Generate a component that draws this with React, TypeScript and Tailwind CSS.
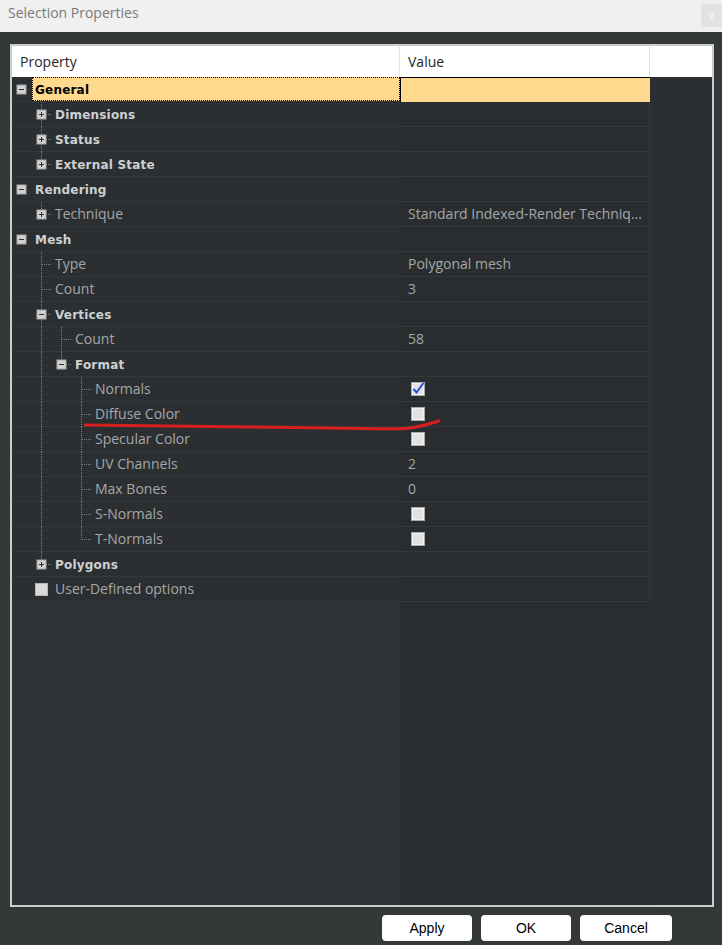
import React from 'react';

type Guide = 'none' | 'pipe' | 'tee' | 'ell' | 'teeBox' | 'ellBox' | 'box' | 'check';

interface Row {
  label: string;
  guides: Guide[];
  sign?: 'plus' | 'minus';
  bold?: boolean;
  value?: string;
  check?: boolean | null;
  selected?: boolean;
}

const rows: Row[] = [
  { label: 'General', guides: ['box'], sign: 'minus', bold: true, selected: true },
  { label: 'Dimensions', guides: ['none', 'teeBox'], sign: 'plus', bold: true },
  { label: 'Status', guides: ['none', 'teeBox'], sign: 'plus', bold: true },
  { label: 'External State', guides: ['none', 'ellBox'], sign: 'plus', bold: true },
  { label: 'Rendering', guides: ['box'], sign: 'minus', bold: true },
  { label: 'Technique', guides: ['none', 'ellBox'], sign: 'plus', value: 'Standard Indexed-Render Techniq...' },
  { label: 'Mesh', guides: ['box'], sign: 'minus', bold: true },
  { label: 'Type', guides: ['none', 'tee'], value: 'Polygonal mesh' },
  { label: 'Count', guides: ['none', 'tee'], value: '3' },
  { label: 'Vertices', guides: ['none', 'teeBox'], sign: 'minus', bold: true },
  { label: 'Count', guides: ['none', 'pipe', 'tee'], value: '58' },
  { label: 'Format', guides: ['none', 'pipe', 'ellBox'], sign: 'minus', bold: true },
  { label: 'Normals', guides: ['none', 'pipe', 'none', 'tee'], check: true },
  { label: 'Diffuse Color', guides: ['none', 'pipe', 'none', 'tee'], check: false },
  { label: 'Specular Color', guides: ['none', 'pipe', 'none', 'tee'], check: false },
  { label: 'UV Channels', guides: ['none', 'pipe', 'none', 'tee'], value: '2' },
  { label: 'Max Bones', guides: ['none', 'pipe', 'none', 'tee'], value: '0' },
  { label: 'S-Normals', guides: ['none', 'pipe', 'none', 'tee'], check: false },
  { label: 'T-Normals', guides: ['none', 'pipe', 'none', 'ell'], check: false },
  { label: 'Polygons', guides: ['none', 'ellBox'], sign: 'plus', bold: true },
  { label: 'User-Defined options', guides: ['none', 'check'] },
];

const DOT = '#7d8082';

const GuideCell = ({ kind, sign }: { kind: Guide; sign?: 'plus' | 'minus' }) => {
  const hasBox = kind === 'box' || kind === 'teeBox' || kind === 'ellBox';
  const full = kind === 'pipe' || kind === 'tee' || kind === 'teeBox';
  const half = kind === 'ell' || kind === 'ellBox';
  const stub = kind === 'tee' || kind === 'ell' || kind === 'teeBox' || kind === 'ellBox';
  return (
    <svg width="20" height="25" viewBox="0 0 20 25" className="shrink-0">
      {full && <line x1="9.5" y1="0" x2="9.5" y2="25" stroke={DOT} strokeDasharray="1 1" />}
      {half && <line x1="9.5" y1="0" x2="9.5" y2="12.5" stroke={DOT} strokeDasharray="1 1" />}
      {stub && <line x1="10" y1="12.5" x2="21" y2="12.5" stroke={DOT} strokeDasharray="1 1" />}
      {hasBox && (
        <g>
          <rect x="5" y="8" width="9" height="9" fill="#d2d2d2" stroke="#a7a7a7" />
          <line x1="7" y1="12.5" x2="12" y2="12.5" stroke="#2e2e2e" />
          {sign === 'plus' && <line x1="9.5" y1="10" x2="9.5" y2="15" stroke="#2e2e2e" />}
        </g>
      )}
      {kind === 'check' && (
        <rect x="3.5" y="6.5" width="12" height="12" fill="#d9d9d9" stroke="#b5b5b5" />
      )}
    </svg>
  );
};

const CheckBox = ({ checked }: { checked: boolean }) => (
  <svg width="14" height="14" viewBox="0 0 14 14" className="shrink-0">
    <rect x="0.5" y="0.5" width="13" height="13" fill="#f2f2f2" stroke="#a9a9a9" />
    <rect x="2" y="2" width="10" height="10" fill="#e2e2e2" />
    {checked && (
      <path d="M2.5 7 L5.5 10.5 L12.5 1" fill="none" stroke="#1f4fd6" strokeWidth="2" />
    )}
  </svg>
);

const TreeRow = ({ row }: { row: Row }) => {
  const boxCell = row.guides.length - 1;
  return (
    <div className="flex h-[25px] shrink-0">
      <div className="flex w-[388px] border-b border-[#34383a] bg-[#2c2f31]">
        {row.guides.map((g, i) => (
          <GuideCell key={i} kind={g} sign={i === boxCell ? row.sign : undefined} />
        ))}
        <div
          className={
            row.selected
              ? 'flex-1 flex items-center pl-[2px] bg-[#ffd98e] border border-dotted border-black'
              : 'flex-1 flex items-center pl-[3px]'
          }
        >
          {row.bold ? (
            <span
              className={`text-[12px] font-bold tracking-[0.2px] pt-[1px] ${row.selected ? 'text-black' : 'text-[#cdd0d2]'}`}
              style={{ fontFamily: '"DejaVu Sans", sans-serif' }}
            >
              {row.label}
            </span>
          ) : (
            <span className="text-[14px] text-[#a4a7a9] leading-none" style={{ fontFamily: '"Open Sans", sans-serif' }}>
              {row.label}
            </span>
          )}
        </div>
      </div>
      <div
        className={
          row.selected
            ? 'flex w-[250px] items-center bg-[#ffd98e] border-l border-t border-black'
            : 'flex w-[250px] items-center bg-[#2a2d2f] border-b border-r border-[#34383a]'
        }
      >
        {row.value && (
          <span className="pl-2 text-[14px] text-[#a4a7a9] leading-none" style={{ fontFamily: '"Open Sans", sans-serif' }}>
            {row.value}
          </span>
        )}
        {row.check !== undefined && row.check !== null && (
          <span className="pl-[11px] flex items-center">
            <CheckBox checked={row.check} />
          </span>
        )}
      </div>
      <div className="flex-1 bg-[#2c2f31]" />
    </div>
  );
};

const App = () => {
  return (
    <div className="w-[722px] h-[945px] bg-[#353839] flex flex-col overflow-hidden" style={{ fontFamily: '"Open Sans", sans-serif' }}>
      <div className="h-[32px] bg-[#f0f0f0] flex items-start justify-between shrink-0">
        <span className="pl-2 pt-[2px] text-[14px] text-[#7a7a7a]">Selection Properties</span>
        <div className="mt-[4px] w-[21px] h-[23px] bg-[#e2e2e2] flex items-center justify-center text-[12px] text-[#f7f7f7]">
          x
        </div>
      </div>

      <div className="flex-1 flex flex-col pt-3 pl-[10px] pr-[8px]">
        <div className="h-[863px] border-2 border-[#c9cbcc] flex flex-col">
          <div className="h-[31px] bg-white flex shrink-0 text-[14px] text-[#262626]">
            <div className="w-[388px] pl-2 flex items-center border-r border-[#e3e3e3]">Property</div>
            <div className="w-[250px] pl-2 flex items-center border-r border-[#e3e3e3]">Value</div>
            <div className="flex-1" />
          </div>

          <div className="flex-1 flex flex-col relative">
            {rows.map((r, i) => (
              <TreeRow key={i} row={r} />
            ))}
            <div className="flex-1 flex">
              <div className="w-[388px] bg-[#2f3234]" />
              <div className="w-[250px] bg-[#2a2d2f]" />
              <div className="flex-1 bg-[#2c2f31]" />
            </div>

            {/* hand-drawn red annotation */}
            <svg className="absolute left-0 top-0 pointer-events-none" width="704" height="420">
              <path
                d="M73 348 C 140 349, 240 350, 318 351 S 395 354, 427 344"
                fill="none"
                stroke="#d61f1f"
                strokeWidth="3"
                strokeLinecap="round"
              />
            </svg>
          </div>
        </div>

        <div className="flex justify-end gap-[9px] pr-[42px] mt-[8px]">
          {['Apply', 'OK', 'Cancel'].map((b) => (
            <button
              key={b}
              className={`${b === 'Cancel' ? 'w-[92px]' : 'w-[90px]'} h-[26px] bg-white rounded-[4px] text-[14px] text-black`}
              style={{ fontFamily: '"Liberation Sans", sans-serif' }}
            >
              {b}
            </button>
          ))}
        </div>
      </div>
    </div>
  );
};

export default App;
